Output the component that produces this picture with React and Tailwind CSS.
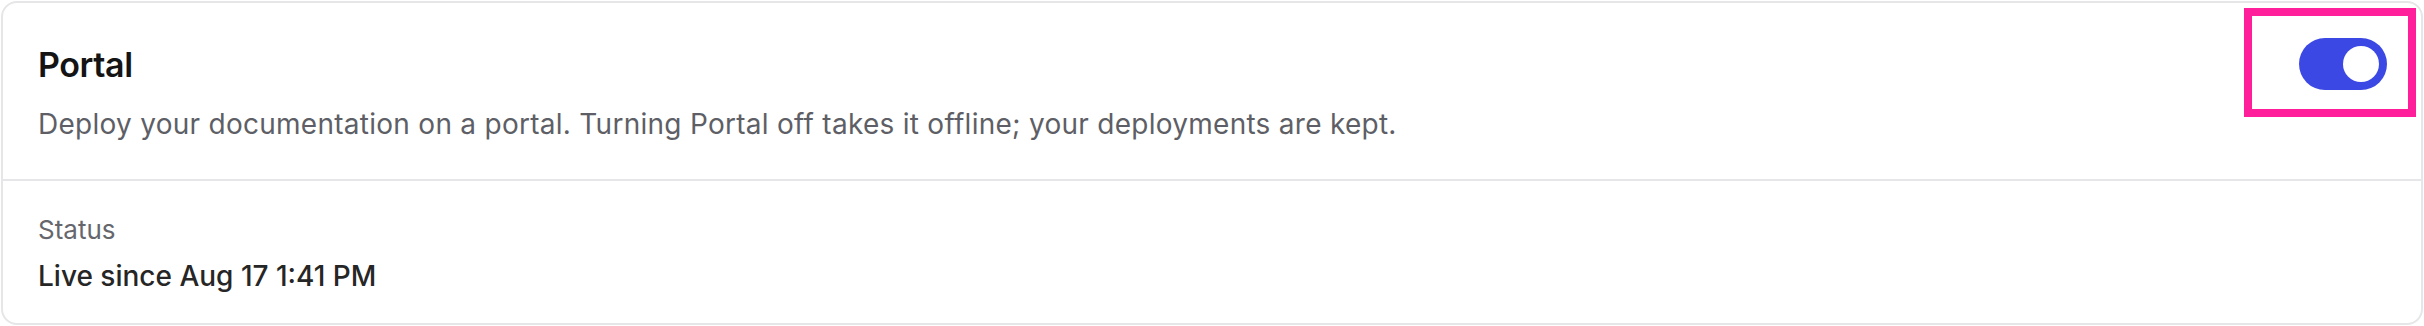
import React, { useState } from 'react'

export default function App() {
    const [enabled, setEnabled] = useState(true)

    return (
        <div className="w-[2424px] h-[326px] bg-white p-px font-['Inter',sans-serif]">
            <div className="h-full rounded-[16px] border-2 border-[#e6e6e8] bg-white flex flex-col">
                <div className="relative flex items-start justify-between pl-[35px] pr-[34px] pt-[40px] pb-[35px] border-b-2 border-[#e6e6e8]">
                    <div className="flex flex-col">
                        <h2 className="text-[34px] leading-[44px] font-semibold tracking-[-0.4px] text-[#141414]">Portal</h2>
                        <p className="mt-[17px] text-[28px] leading-[40px] tracking-[0.27px] text-[#5e5f66]">
                            Deploy your documentation on a portal. Turning Portal off takes it offline; your deployments are kept.
                        </p>
                    </div>
                    <button
                        onClick={() => setEnabled(!enabled)}
                        className={`mt-[-5px] w-[88px] h-[52px] rounded-full flex items-center px-[8px] ${enabled ? 'bg-[#3c48e4] justify-end' : 'bg-[#d4d4d8] justify-start'}`}
                    >
                        <span className="w-[36px] h-[36px] rounded-full bg-white block" />
                    </button>
                    {/* highlight frame */}
                    <div className="absolute left-[2241px] top-[5px] w-[172px] h-[109px] border-[8px] border-[#ff1f9a] pointer-events-none" />
                </div>
                <div className="pl-[35px] pt-[32px] flex flex-col">
                    <span className="text-[26px] leading-[34px] text-[#66676d]">Status</span>
                    <span className="mt-[9px] text-[28px] leading-[40px] font-medium text-[#262626]">Live since Aug 17 1:41 PM</span>
                </div>
            </div>
        </div>
    )
}
